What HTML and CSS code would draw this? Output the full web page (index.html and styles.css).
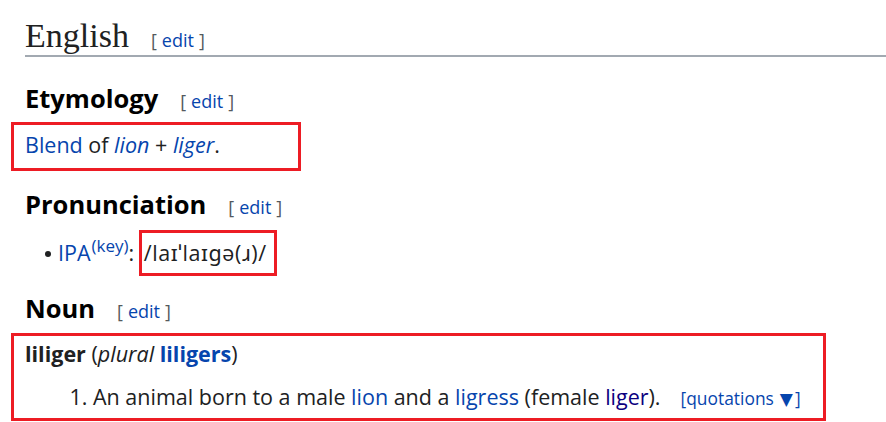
FILE: index.html
```html
<!DOCTYPE html>
<html lang="en">
<head>
<meta charset="utf-8">
<title>liliger</title>
<link rel="stylesheet" href="styles.css">
</head>
<body>
<div class="content">
  <h2 class="lang-heading">English<span class="edit">[<a href="#">edit</a>]</span></h2>

  <h3 class="section-heading">Etymology<span class="edit">[<a href="#">edit</a>]</span></h3>
  <p class="mark etym"><a href="#">Blend</a> of <i><a href="#">lion</a></i> + <i><a href="#">liger</a></i>.</p>

  <h3 class="section-heading after-box">Pronunciation<span class="edit">[<a href="#">edit</a>]</span></h3>
  <ul class="pron">
    <li><a href="#">IPA</a><sup><a href="#">(key)</a></sup>: <span class="mark ipa">/laɪˈlaɪɡə(ɹ)/</span></li>
  </ul>

  <h3 class="section-heading after-list">Noun<span class="edit">[<a href="#">edit</a>]</span></h3>
  <div class="mark noun">
    <p class="headword-line"><strong>liliger</strong> (<i>plural</i> <strong><a href="#">liligers</a></strong>)</p>
    <ol class="senses">
      <li>An animal born to a male <a href="#">lion</a> and a <a href="#">ligress</a> (female <a href="#" class="visited">liger</a>).<span class="quot">[quotations<span class="arrow">▼</span>]</span></li>
    </ol>
  </div>
</div>
</body>
</html>
```
FILE: styles.css
```css
html, body {
  margin: 0;
  padding: 0;
  background: #fff;
}
body {
  font-family: "Open Sans", "Noto Sans", sans-serif;
  font-size: 21.5px;
  line-height: 30px;
  color: #202122;
}
a {
  color: #0645ad;
  text-decoration: none;
}
a.visited {
  color: #0b0080;
}
.content {
  padding-left: 25px;
}
.lang-heading {
  margin: 16px 0 0;
  font-family: "Liberation Serif", serif;
  font-weight: normal;
  font-size: 34px;
  line-height: 39px;
  border-bottom: 2px solid #a2a9b1;
}
.edit {
  font-family: "Open Sans", sans-serif;
  font-weight: normal;
  font-size: 18px;
  line-height: 1;
  color: #54595d;
  margin-left: 22px;
}
.edit a {
  margin: 0 5px;
}
.section-heading {
  margin: 25px 0 0;
  font-size: 25.5px;
  font-weight: 700;
  line-height: 32px;
  color: #000;
}
.section-heading .edit {
  margin-left: 22px;
}
.section-heading.after-box {
  margin-top: 17px;
}
.section-heading.after-list {
  margin-top: 16px;
}
.mark {
  border: 3px solid #ed1c24;
}
.etym {
  width: 273px;
  margin: 8px 0 0 -14px;
  padding: 5px 0 8px 11px;
}
.pron {
  list-style: none;
  margin: 10px 0 0;
  padding: 0 0 0 20px;
}
.pron li::before {
  content: "";
  display: inline-block;
  width: 6px;
  height: 6px;
  border-radius: 50%;
  background: #202122;
  margin-right: 7px;
  vertical-align: 4px;
}
.pron sup {
  font-size: 17px;
  line-height: 1;
  vertical-align: 9px;
  margin-left: 1px;
}
.ipa {
  display: inline-block;
  padding: 5px 7px 5px 2px;
  margin-left: -1px;
  letter-spacing: 0.6px;
}
.noun {
  margin: 9px 0 0 -14px;
  width: 798px;
  padding: 3px 0 4px 11px;
}
.headword-line {
  margin: 0;
}
.headword-line strong {
  font-weight: 700;
}
.senses {
  margin: 13px 0 0;
  padding-left: 68px;
}
.quot {
  font-size: 17.4px;
  color: #0645ad;
  margin-left: 20px;
}
.arrow {
  font-family: "DejaVu Sans", sans-serif;
  font-size: 17px;
  margin: 0 2px 0 6px;
}
```
